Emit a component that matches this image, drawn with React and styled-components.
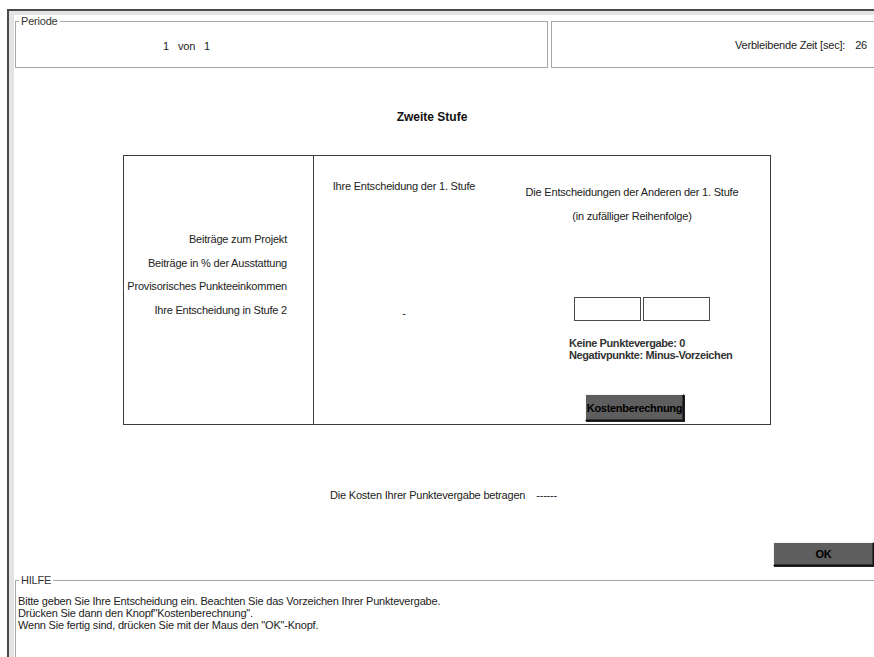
import React from "react";
import styled, { createGlobalStyle } from "styled-components";

const GlobalStyle = createGlobalStyle`
  html, body {
    margin: 0;
    padding: 0;
    background: #fff;
    overflow: hidden;
  }
  body {
    font-family: "Liberation Sans", Arial, sans-serif;
    font-size: 11px;
    letter-spacing: -0.2px;
    color: #222;
  }
`;

const Screen = styled.div`
  width: 874px;
  height: 657px;
  padding: 9px 0 0 7px;
  box-sizing: border-box;
  overflow: hidden;
`;

const Window = styled.div`
  width: 900px;
  height: 660px;
  border-top: 2px solid #4a4a4a;
  border-left: 2px solid #4a4a4a;
  box-sizing: border-box;
`;

const Client = styled.div`
  height: 100%;
  border-top: 4px solid #e4e4e4;
  border-left: 5px solid #e4e4e4;
  box-sizing: border-box;
  background: #fff;
  display: flex;
  flex-direction: column;
`;

const Header = styled.div`
  display: grid;
  grid-template-columns: 533px 1fr;
  gap: 3px;
  margin-left: 1px;
`;

const GroupBox = styled.fieldset`
  margin: ${(p) => p.$top || 0}px 0 0 ${(p) => (p.$inset ? 1 : 0)}px;
  padding: 0;
  min-width: 0;
  border: 1px solid #a6a6a6;
  height: ${(p) => (p.$height ? `${p.$height}px` : "auto")};
  flex: ${(p) => (p.$grow ? 1 : "none")};
  box-sizing: border-box;
  legend {
    margin-left: 3px;
    padding: 0 2px;
    font-size: 11px;
    line-height: 12px;
    color: #333;
  }
`;

const PeriodRow = styled.div`
  display: flex;
  gap: 9px;
  padding: 13px 0 0 147px;
`;

const TimerBox = styled.div`
  margin-top: 6px;
  height: 47px;
  border: 1px solid #a6a6a6;
  border-right: none;
  display: flex;
  align-items: center;
  padding-left: 183px;
  gap: 10px;
  box-sizing: border-box;
  white-space: nowrap;
`;

const Main = styled.div`
  width: 836px;
  display: flex;
  flex-direction: column;
`;

const Title = styled.h1`
  margin: 42px 0 0;
  text-align: center;
  font-size: 12px;
  line-height: 14px;
  font-weight: bold;
  letter-spacing: 0;
  color: #111;
`;

const Board = styled.div`
  margin: 31px 0 0 109px;
  width: 648px;
  height: 270px;
  border: 1px solid #3c3c3c;
  box-sizing: border-box;
  display: grid;
  grid-template-columns: 190px 1fr;
`;

const LabelColumn = styled.div`
  border-right: 1px solid #3c3c3c;
  display: flex;
  flex-direction: column;
  align-items: flex-end;
  padding: 72px 26px 0 0;
`;

const RowLabel = styled.div`
  line-height: 23.5px;
  white-space: nowrap;
`;

const DecisionArea = styled.div`
  display: grid;
  grid-template-columns: 180px 1fr;
`;

const OwnColumn = styled.div`
  display: flex;
  flex-direction: column;
  align-items: center;
  padding-top: 24px;
`;

const Caption = styled.div`
  line-height: 12px;
  white-space: nowrap;
  text-align: center;
  margin-top: ${(p) => p.$top || 0}px;
`;

const OthersColumn = styled.div`
  display: flex;
  flex-direction: column;
  padding-top: 30px;
`;

const Inputs = styled.div`
  display: flex;
  gap: 2px;
  margin: 75px 0 0 80px;
`;

const Entry = styled.input`
  width: 67px;
  height: 24px;
  margin: 0;
  padding: 0 3px;
  border: 1px solid #4a4a4a;
  box-sizing: border-box;
  background: #fff;
  font: 11px "Liberation Sans", Arial, sans-serif;
  outline: none;
`;

const Note = styled.div`
  margin: 16px 0 0 75px;
  font-weight: bold;
  line-height: 12px;
  letter-spacing: -0.4px;
  color: #333;
`;

const BevelButton = styled.button`
  width: ${(p) => p.$width}px;
  height: ${(p) => p.$height}px;
  margin: 0;
  padding: 0;
  background: #5e5e5e;
  border: 1px solid;
  border-color: #f4f4f4 #111 #111 #f4f4f4;
  box-shadow: inset -1px -1px 0 #333, 1px 1px 0 #222;
  font: bold 11px "Liberation Sans", Arial, sans-serif;
  letter-spacing: -0.3px;
  color: #000;
  white-space: nowrap;
  cursor: pointer;
`;

const CalcButton = styled(BevelButton)`
  margin: 33px 0 0 91px;
`;

const CostLine = styled.div`
  margin-top: 64px;
  display: flex;
  gap: 11px;
  padding-left: 316px;
  line-height: 12px;
`;

const Actions = styled.div`
  display: flex;
  justify-content: flex-end;
  margin-top: 41px;
  padding-right: 5px;
  width: 860px;
`;

const HelpText = styled.div`
  padding: 9px 0 0 2px;
  line-height: 12px;
  color: #222;
`;

export default function App() {
  return (
    <>
      <GlobalStyle />
      <Screen>
        <Window>
          <Client>
            <Header>
              <GroupBox $height={53}>
                <legend>Periode</legend>
                <PeriodRow>
                  <span>1</span>
                  <span>von</span>
                  <span>1</span>
                </PeriodRow>
              </GroupBox>
              <TimerBox>
                <span>Verbleibende Zeit [sec]:</span>
                <span>26</span>
              </TimerBox>
            </Header>

            <Main>
              <Title>Zweite Stufe</Title>

              <Board>
                <LabelColumn>
                  <RowLabel>Beiträge zum Projekt</RowLabel>
                  <RowLabel>Beiträge in % der Ausstattung</RowLabel>
                  <RowLabel>Provisorisches Punkteeinkommen</RowLabel>
                  <RowLabel>Ihre Entscheidung in Stufe 2</RowLabel>
                </LabelColumn>
                <DecisionArea>
                  <OwnColumn>
                    <Caption>Ihre Entscheidung der 1. Stufe</Caption>
                    <Caption $top={115}>-</Caption>
                  </OwnColumn>
                  <OthersColumn>
                    <Caption>Die Entscheidungen der Anderen der 1. Stufe</Caption>
                    <Caption $top={12}>(in zufälliger Reihenfolge)</Caption>
                    <Inputs>
                      <Entry type="text" />
                      <Entry type="text" />
                    </Inputs>
                    <Note>
                      Keine Punktevergabe: 0
                      <br />
                      Negativpunkte: Minus-Vorzeichen
                    </Note>
                    <div>
                      <CalcButton $width={99} $height={27}>
                        Kostenberechnung
                      </CalcButton>
                    </div>
                  </OthersColumn>
                </DecisionArea>
              </Board>

              <CostLine>
                <span>Die Kosten Ihrer Punktevergabe betragen</span>
                <span>------</span>
              </CostLine>
            </Main>

            <Actions>
              <BevelButton $width={101} $height={24}>
                OK
              </BevelButton>
            </Actions>

            <GroupBox $top={8} $inset $grow>
              <legend>HILFE</legend>
              <HelpText>
                Bitte geben Sie Ihre Entscheidung ein. Beachten Sie das Vorzeichen Ihrer Punktevergabe.
                <br />
                Drücken Sie dann den Knopf"Kostenberechnung".
                <br />
                Wenn Sie fertig sind, drücken Sie mit der Maus den "OK"-Knopf.
              </HelpText>
            </GroupBox>
          </Client>
        </Window>
      </Screen>
    </>
  );
}
